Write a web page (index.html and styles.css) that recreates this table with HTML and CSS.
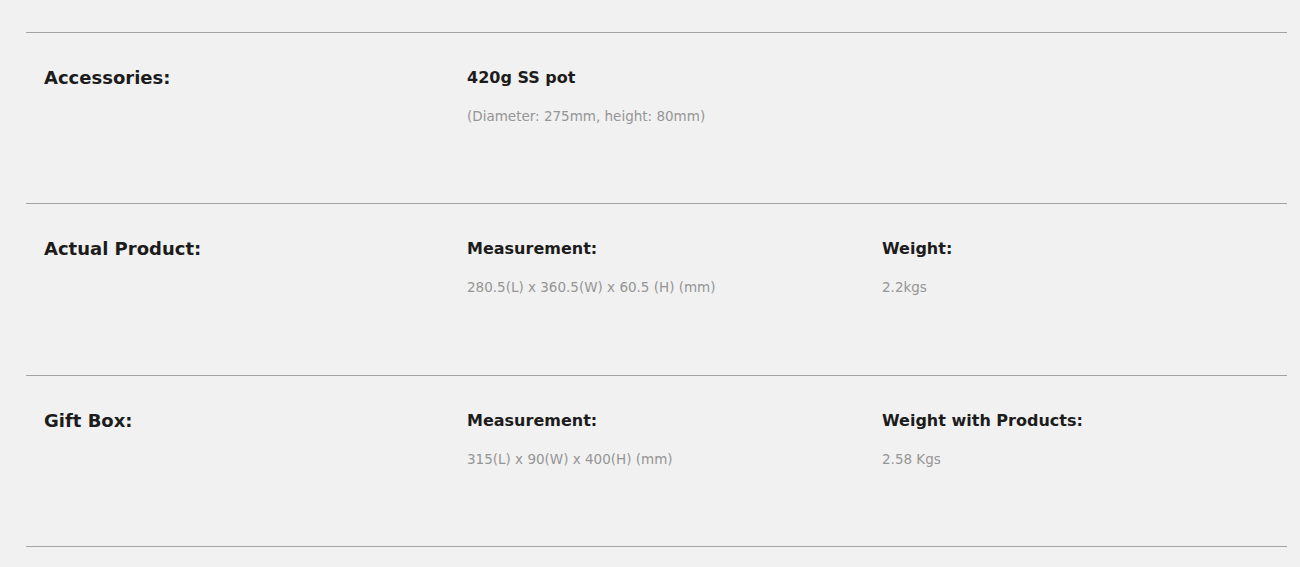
FILE: index.html
```html
<!DOCTYPE html>
<html lang="en">
<head>
<meta charset="utf-8">
<title>Specifications</title>
<link rel="stylesheet" href="styles.css">
</head>
<body>
<section class="specs">
  <div class="spec-row">
    <h3 class="spec-label">Accessories:</h3>
    <div class="spec-cell">
      <p class="spec-title">420g SS pot</p>
      <p class="spec-value">(Diameter: 275mm, height: 80mm)</p>
    </div>
    <div class="spec-cell"></div>
  </div>
  <div class="spec-row">
    <h3 class="spec-label">Actual Product:</h3>
    <div class="spec-cell">
      <p class="spec-title">Measurement:</p>
      <p class="spec-value">280.5(L) x 360.5(W) x 60.5 (H) (mm)</p>
    </div>
    <div class="spec-cell">
      <p class="spec-title">Weight:</p>
      <p class="spec-value">2.2kgs</p>
    </div>
  </div>
  <div class="spec-row">
    <h3 class="spec-label">Gift Box:</h3>
    <div class="spec-cell">
      <p class="spec-title">Measurement:</p>
      <p class="spec-value">315(L) x 90(W) x 400(H) (mm)</p>
    </div>
    <div class="spec-cell">
      <p class="spec-title">Weight with Products:</p>
      <p class="spec-value">2.58 Kgs</p>
    </div>
  </div>
  <div class="spec-end"></div>
</section>
</body>
</html>
```
FILE: styles.css
```css
html, body {
  margin: 0;
  padding: 0;
  background: #f1f1f1;
}
body {
  font-family: "DejaVu Sans", "Open Sans", sans-serif;
  color: #1a1a1a;
}
.specs {
  margin: 32px 13px 0 26px;
}
.spec-row {
  box-sizing: border-box;
  height: 171.4px;
  border-top: 1px solid #a3a3a3;
  display: grid;
  grid-template-columns: 423px 415px 1fr;
  padding: 34px 0 0 18px;
}
.spec-end {
  border-top: 1px solid #a3a3a3;
}
.spec-label {
  margin: 0;
  font-size: 18px;
  font-weight: 700;
  line-height: 22px;
  color: #1c1c1c;
}
.spec-cell {
  display: flex;
  flex-direction: column;
  gap: 19px;
}
.spec-title {
  margin: 0;
  font-size: 16px;
  font-weight: 700;
  line-height: 22px;
  color: #1c1c1c;
}
.spec-value {
  margin: 0;
  font-size: 13.5px;
  line-height: 16px;
  color: #959595;
}
```
